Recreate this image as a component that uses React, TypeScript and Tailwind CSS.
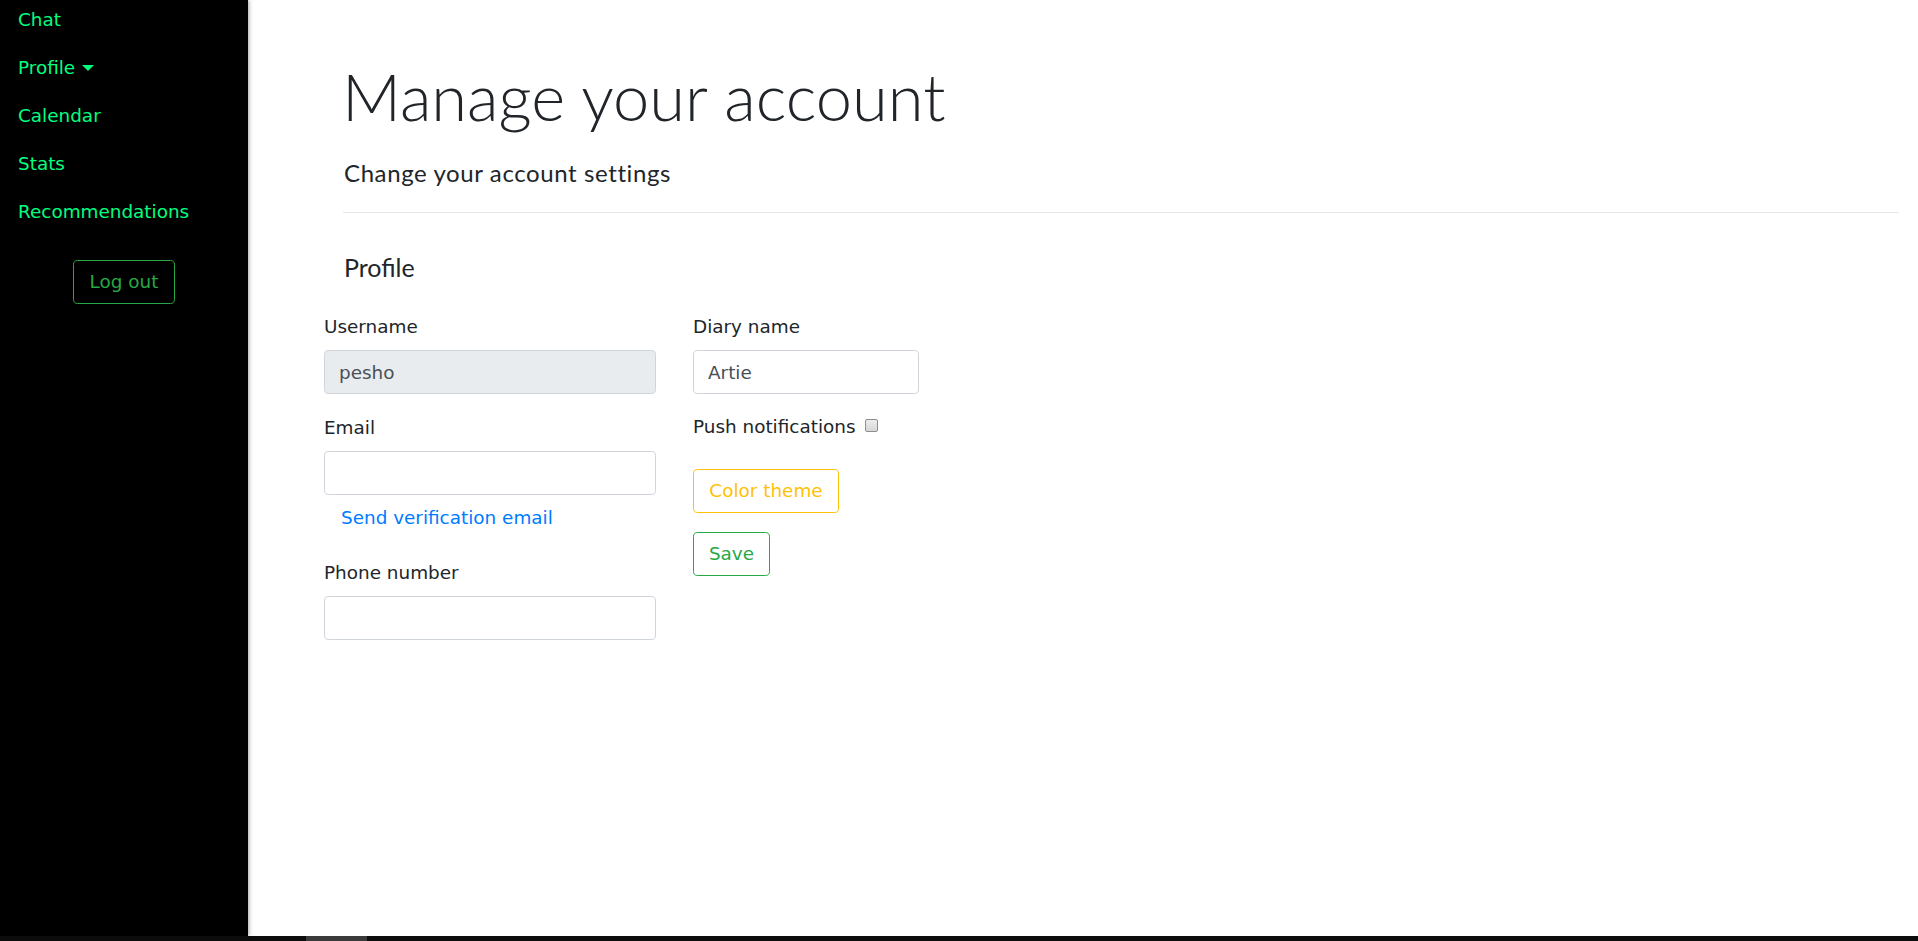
import React from "react";

const body = "font-['DejaVu_Sans','Verdana',sans-serif]";
const head = "font-['Lato','Segoe_UI',sans-serif]";

function NavItem({ children }: { children: React.ReactNode }) {
  return (
    <div className="h-[48px] leading-[48px] pl-[18px] text-[18.4px] text-[#00ff7f] whitespace-nowrap">
      {children}
    </div>
  );
}

function Label({ children }: { children: React.ReactNode }) {
  return (
    <div className="h-[28px] leading-[28px] text-[18.4px] text-[#212529] whitespace-nowrap">
      {children}
    </div>
  );
}

export default function App() {
  return (
    <div className={`${body} flex h-[941px] w-full flex-col overflow-hidden bg-white`}>
      <div className="flex min-h-0 flex-1">
        <aside className="relative z-10 w-[248px] shrink-0 bg-black shadow-[1px_0_4px_rgba(0,0,0,0.35)]">
          <nav className="-mt-[4px]">
            <NavItem>Chat</NavItem>
            <NavItem>
              Profile
              <svg
                width="12"
                height="6"
                viewBox="0 0 12 6"
                className="ml-[7px] inline-block align-[3px]"
              >
                <path d="M0 0 L12 0 L6 6 Z" fill="#00ff7f" />
              </svg>
            </NavItem>
            <NavItem>Calendar</NavItem>
            <NavItem>Stats</NavItem>
            <NavItem>Recommendations</NavItem>
          </nav>
          <div className="mt-[24px] flex justify-center">
            <button className="flex h-[44px] w-[102px] items-center justify-center rounded-[4.6px] border border-[#28a745] text-[18.4px] leading-[27.6px] text-[#28a745]">
              Log out
            </button>
          </div>
        </aside>
        <main className="min-w-0 flex-1 bg-white pl-[96px] pr-[19px]">
          <h1 className={`${head} -ml-[2px] mt-[64px] text-[65px] leading-[65px] font-light text-[#212529] whitespace-nowrap`}>
            Manage your account
          </h1>
          <p className={`${head} mt-[32px] text-[24px] leading-[24px] tracking-[0.6px] font-normal text-[#212529] whitespace-nowrap`}>
            Change your account settings
          </p>
          <div className="-ml-[1px] mt-[27px] h-px bg-[#e6e6e6]" />
          <h4 className={`${head} mt-[42px] text-[25px] leading-[25px] font-normal text-[#212529]`}>
            Profile
          </h4>
          <div className="-ml-[20px] mt-[33px] grid grid-cols-[332px_226px] gap-x-[37px]">
            <div className="flex flex-col">
              <Label>Username</Label>
              <input
                readOnly
                value="pesho"
                className="mt-[9px] h-[44px] w-full rounded-[4.6px] border border-[#ced4da] bg-[#e9ecef] px-[14px] text-[18.4px] text-[#495057] outline-none"
              />
              <div className="mt-[20px]">
                <Label>Email</Label>
              </div>
              <input
                readOnly
                value=""
                className="mt-[9px] h-[44px] w-full rounded-[4.6px] border border-[#ced4da] bg-white px-[14px] text-[18.4px] text-[#495057] outline-none"
              />
              <div className="mt-[9px] h-[28px] pl-[17px] leading-[28px] text-[18.4px] text-[#007bff] whitespace-nowrap">
                Send verification email
              </div>
              <div className="mt-[27px]">
                <Label>Phone number</Label>
              </div>
              <input
                readOnly
                value=""
                className="mt-[9px] h-[44px] w-full rounded-[4.6px] border border-[#ced4da] bg-white px-[14px] text-[18.4px] text-[#495057] outline-none"
              />
            </div>
            <div className="flex flex-col items-start">
              <Label>Diary name</Label>
              <input
                readOnly
                value="Artie"
                className="mt-[9px] h-[44px] w-[226px] rounded-[4.6px] border border-[#ced4da] bg-white px-[14px] text-[18.4px] text-[#495057] outline-none"
              />
              <div className="mt-[19px] flex h-[28px] items-center leading-[28px] text-[18.4px] text-[#212529] whitespace-nowrap">
                <span>Push notifications</span>
                <span className="ml-[9px] mb-[3px] inline-block h-[13px] w-[13px] rounded-[2px] border border-[#8e8e8e] bg-gradient-to-b from-[#ededed] to-[#d6d6d6]" />
              </div>
              <button className="mt-[28px] flex h-[44px] w-[146px] items-center justify-center rounded-[4.6px] border border-[#ffc107] text-[18.4px] leading-[27.6px] text-[#ffc107]">
                Color theme
              </button>
              <button className="mt-[19px] flex h-[44px] w-[77px] items-center justify-center rounded-[4.6px] border border-[#28a745] text-[18.4px] leading-[27.6px] text-[#28a745]">
                Save
              </button>
            </div>
          </div>
        </main>
      </div>
      <div className="relative h-[5px] shrink-0 bg-[#0d0d0d]">
        <div className="absolute left-[306px] top-0 h-[5px] w-[61px] bg-[#3a3a3a]" />
      </div>
    </div>
  );
}
